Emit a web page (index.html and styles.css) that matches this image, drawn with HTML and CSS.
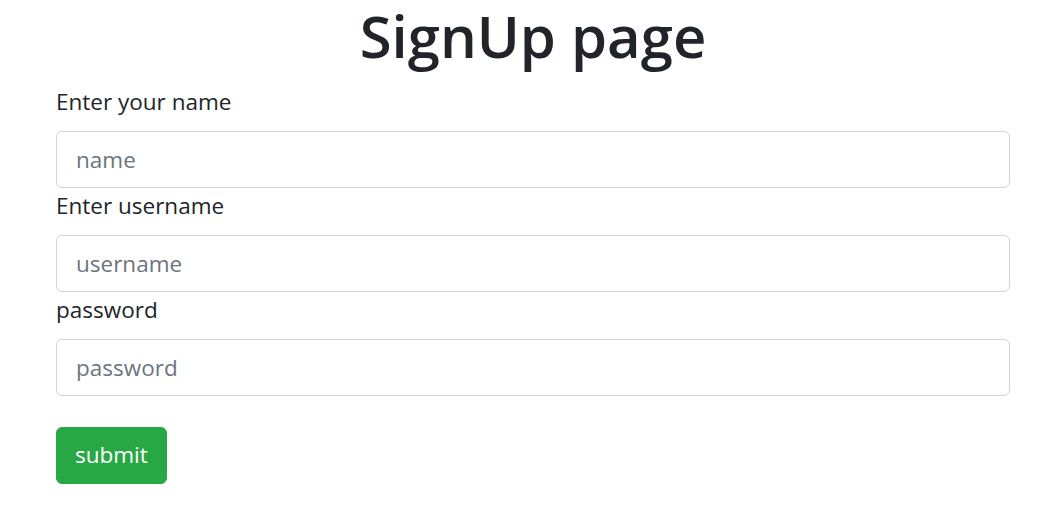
FILE: index.html
```html
<!DOCTYPE html>
<html lang="en">
<head>
<meta charset="utf-8">
<title>SignUp page</title>
<link rel="stylesheet" href="styles.css">
</head>
<body>
<main class="page">
  <h1 class="title">SignUp page</h1>
  <form class="signup">
    <label class="field-label" for="name">Enter your name</label>
    <input class="field-input" id="name" type="text" placeholder="name">
    <label class="field-label" for="username">Enter username</label>
    <input class="field-input" id="username" type="text" placeholder="username">
    <label class="field-label" for="password">password</label>
    <input class="field-input" id="password" type="password" placeholder="password">
    <button class="submit-btn" type="submit">submit</button>
  </form>
</main>
</body>
</html>
```

FILE: styles.css
```css
html, body {
  margin: 0;
  padding: 0;
  background: #ffffff;
}

body {
  font-family: "Open Sans", "Noto Sans", "Liberation Sans", sans-serif;
  color: #212529;
}

.page {
  padding: 0 37px 0 56px;
}

.title {
  margin: 0 0 12px;
  font-size: 58px;
  font-weight: 600;
  line-height: 72px;
  text-align: center;
}

.signup {
  display: flex;
  flex-direction: column;
  align-items: stretch;
}

.field-label {
  display: block;
  margin: 0 0 11px;
  font-size: 22.5px;
  line-height: 36px;
}

.field-input {
  box-sizing: border-box;
  display: block;
  width: 100%;
  height: 57px;
  margin: 0;
  padding: 0 19px;
  border: 1px solid #ced4da;
  border-radius: 6px;
  font-family: inherit;
  font-size: 22.5px;
  color: #495057;
  background: #fff;
  outline: none;
}

.field-input::placeholder {
  color: #6c757d;
  opacity: 1;
}

.submit-btn {
  align-self: flex-start;
  box-sizing: border-box;
  height: 57px;
  margin-top: 31px;
  padding: 0 18px;
  border: 1px solid #28a745;
  border-radius: 6px;
  background: #28a745;
  color: #fff;
  font-family: inherit;
  font-size: 22.5px;
  line-height: 1;
  cursor: pointer;
}
```
